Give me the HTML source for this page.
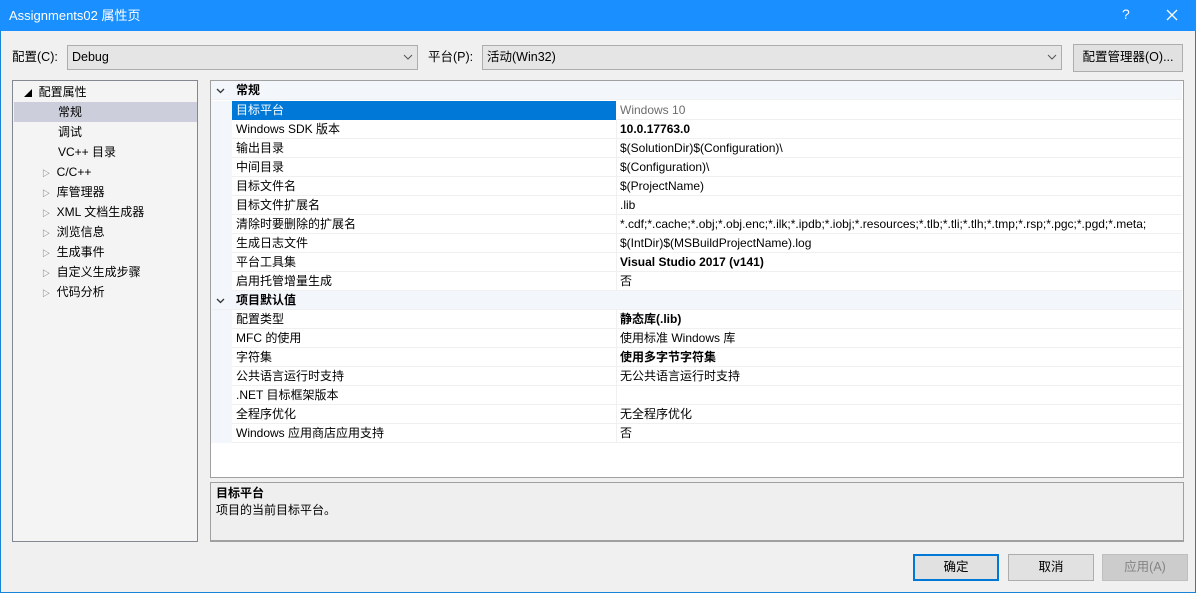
<!DOCTYPE html>
<html><head><meta charset="utf-8"><style>
*{box-sizing:border-box;margin:0;padding:0}
body{width:1196px;height:593px;overflow:hidden;background:#f0f0f0;font-family:"Liberation Sans","Noto Sans CJK SC",sans-serif;font-size:12px;line-height:15px;color:#000;position:relative}
.win{position:absolute;left:0;top:0;width:1196px;height:593px;border:1px solid #1883d7}
.title{position:absolute;left:0;top:0;width:1196px;height:31px;background:#1a8fff;color:#fff}
.title .t{position:absolute;left:9px;top:8px;font-size:13px}
.abs{position:absolute;white-space:nowrap}
.combo{position:absolute;height:25px;background:#e5e5e5;border:1px solid #adadad;padding:4px 0 0 4px;font-size:12.5px}
.combo svg{position:absolute;right:4px;top:8px}
.btn{position:absolute;background:#e1e1e1;border:1px solid #adadad;text-align:center;font-size:12.5px}
.tree{position:absolute;left:12px;top:80px;width:186px;height:462px;background:#f4f4f4;border:1px solid #828790}
.ti{position:absolute;left:1px;width:183px;height:20px;padding-top:3px}
.grid{position:absolute;left:210px;top:80px;width:974px;height:398px;background:#fff;border:1px solid #a0a0a0}
.row{position:absolute;left:0;width:971px;height:19px;border-bottom:1px solid #f0f0f0}
.cat{position:absolute;left:0;top:0;width:21px;height:19px;background:#f3f6fb}
.n{position:absolute;left:25px;top:2px}
.v{position:absolute;left:409px;top:2px}
.sep{position:absolute;left:405px;top:0;width:1px;height:19px;background:#f0f0f0}
.hdr{background:#f3f6fb}
.b{font-weight:bold}
.desc{position:absolute;left:210px;top:482px;width:974px;height:60px;background:#efefef;border:1px solid #a0a0a0;border-bottom:2px solid #a0a0a0}
</style></head><body>
<div class="win"></div>
<div class="title"><span class="t">Assignments02 属性页</span>
<span class="abs" style="left:1122px;top:7px;font-size:14px">?</span>
<svg class="abs" style="left:1166px;top:9px" width="12" height="12"><path d="M1 1L11 11M11 1L1 11" stroke="#fff" stroke-width="1.3"/></svg></div>

<span class="abs" style="left:12px;top:50px;font-size:12.5px">配置(C):</span>
<div class="combo" style="left:67px;top:45px;width:351px">Debug<svg width="10" height="6"><path d="M1 1L5 5L9 1" stroke="#555" fill="none"/></svg></div>
<span class="abs" style="left:428px;top:50px;font-size:12.5px">平台(P):</span>
<div class="combo" style="left:482px;top:45px;width:580px">活动(Win32)<svg width="10" height="6"><path d="M1 1L5 5L9 1" stroke="#555" fill="none"/></svg></div>
<div class="btn" style="left:1073px;top:44px;width:110px;height:28px;padding-top:5px">配置管理器(O)...</div>

<div class="tree">
<div class="ti" style="top:1px;padding-left:10px"><span style="font-size:8px">◢</span>&nbsp; 配置属性</div>
<div class="ti" style="top:21px;padding-left:44px;background:#cccedb">常规</div>
<div class="ti" style="top:41px;padding-left:44px">调试</div>
<div class="ti" style="top:61px;padding-left:44px">VC++ 目录</div>
<div class="ti" style="top:81px;padding-left:28px"><span style="font-size:8px;color:#555">▷</span>&nbsp; C/C++</div>
<div class="ti" style="top:101px;padding-left:28px"><span style="font-size:8px;color:#555">▷</span>&nbsp; 库管理器</div>
<div class="ti" style="top:121px;padding-left:28px"><span style="font-size:8px;color:#555">▷</span>&nbsp; XML 文档生成器</div>
<div class="ti" style="top:141px;padding-left:28px"><span style="font-size:8px;color:#555">▷</span>&nbsp; 浏览信息</div>
<div class="ti" style="top:161px;padding-left:28px"><span style="font-size:8px;color:#555">▷</span>&nbsp; 生成事件</div>
<div class="ti" style="top:181px;padding-left:28px"><span style="font-size:8px;color:#555">▷</span>&nbsp; 自定义生成步骤</div>
<div class="ti" style="top:201px;padding-left:28px"><span style="font-size:8px;color:#555">▷</span>&nbsp; 代码分析</div>
</div>

<div class="grid">
<div class="row hdr" style="top:0"><svg class="abs" style="left:5px;top:7px" width="9" height="6"><path d="M1 1L4.5 4.5L8 1" stroke="#333" fill="none" stroke-width="1.3"/></svg><span class="n b">常规</span></div>
<div class="row" style="top:20px"><div class="cat"></div><div style="position:absolute;left:21px;top:0;width:384px;height:19px;background:#0078d7"></div><span class="n" style="color:#fff">目标平台</span><span class="v" style="color:#6d6d6d">Windows 10</span></div>
<div class="row" style="top:39px"><div class="cat"></div><div class="sep"></div><span class="n">Windows SDK 版本</span><span class="v b">10.0.17763.0</span></div>
<div class="row" style="top:58px"><div class="cat"></div><div class="sep"></div><span class="n">输出目录</span><span class="v">$(SolutionDir)$(Configuration)\</span></div>
<div class="row" style="top:77px"><div class="cat"></div><div class="sep"></div><span class="n">中间目录</span><span class="v">$(Configuration)\</span></div>
<div class="row" style="top:96px"><div class="cat"></div><div class="sep"></div><span class="n">目标文件名</span><span class="v">$(ProjectName)</span></div>
<div class="row" style="top:115px"><div class="cat"></div><div class="sep"></div><span class="n">目标文件扩展名</span><span class="v">.lib</span></div>
<div class="row" style="top:134px"><div class="cat"></div><div class="sep"></div><span class="n">清除时要删除的扩展名</span><span class="v">*.cdf;*.cache;*.obj;*.obj.enc;*.ilk;*.ipdb;*.iobj;*.resources;*.tlb;*.tli;*.tlh;*.tmp;*.rsp;*.pgc;*.pgd;*.meta;</span></div>
<div class="row" style="top:153px"><div class="cat"></div><div class="sep"></div><span class="n">生成日志文件</span><span class="v">$(IntDir)$(MSBuildProjectName).log</span></div>
<div class="row" style="top:172px"><div class="cat"></div><div class="sep"></div><span class="n">平台工具集</span><span class="v b">Visual Studio 2017 (v141)</span></div>
<div class="row" style="top:191px"><div class="cat"></div><div class="sep"></div><span class="n">启用托管增量生成</span><span class="v">否</span></div>
<div class="row hdr" style="top:210px"><svg class="abs" style="left:5px;top:7px" width="9" height="6"><path d="M1 1L4.5 4.5L8 1" stroke="#333" fill="none" stroke-width="1.3"/></svg><span class="n b">项目默认值</span></div>
<div class="row" style="top:229px"><div class="cat"></div><div class="sep"></div><span class="n">配置类型</span><span class="v b">静态库(.lib)</span></div>
<div class="row" style="top:248px"><div class="cat"></div><div class="sep"></div><span class="n">MFC 的使用</span><span class="v">使用标准 Windows 库</span></div>
<div class="row" style="top:267px"><div class="cat"></div><div class="sep"></div><span class="n">字符集</span><span class="v b">使用多字节字符集</span></div>
<div class="row" style="top:286px"><div class="cat"></div><div class="sep"></div><span class="n">公共语言运行时支持</span><span class="v">无公共语言运行时支持</span></div>
<div class="row" style="top:305px"><div class="cat"></div><div class="sep"></div><span class="n">.NET 目标框架版本</span><span class="v"></span></div>
<div class="row" style="top:324px"><div class="cat"></div><div class="sep"></div><span class="n">全程序优化</span><span class="v">无全程序优化</span></div>
<div class="row" style="top:343px"><div class="cat"></div><div class="sep"></div><span class="n">Windows 应用商店应用支持</span><span class="v">否</span></div>
</div>

<div class="desc"><span class="abs b" style="left:5px;top:3px">目标平台</span><span class="abs" style="left:5px;top:20px">项目的当前目标平台。</span></div>

<div class="btn" style="left:913px;top:554px;width:86px;height:27px;border:2px solid #0078d7;padding-top:4px">确定</div>
<div class="btn" style="left:1008px;top:554px;width:86px;height:27px;padding-top:5px">取消</div>
<div class="btn" style="left:1102px;top:554px;width:86px;height:27px;padding-top:5px;background:#cccccc;border-color:#bfbfbf;color:#838383">应用(A)</div>
</body></html>
